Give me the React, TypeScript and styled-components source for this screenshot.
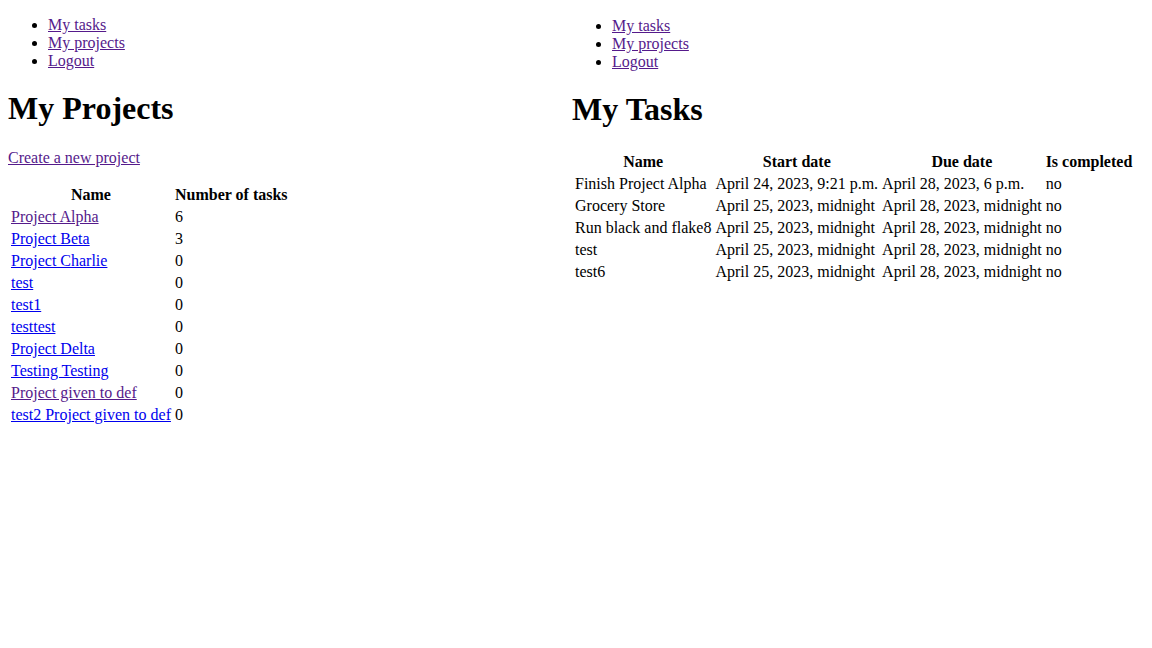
import React from "react";
import styled, { createGlobalStyle } from "styled-components";

const Global = createGlobalStyle`
  html, body { margin: 0; padding: 0; background: #fff; }
  body { font-family: "Liberation Serif", "Times New Roman", serif; font-size: 16px; color: #000; }
`;

const Page = styled.div`
  display: flex;
  align-items: flex-start;
`;

const Pane = styled.div<{ $width?: number; $offset?: number }>`
  display: flow-root;
  box-sizing: border-box;
  width: ${(p) => (p.$width ? `${p.$width}px` : "auto")};
  flex: ${(p) => (p.$width ? "none" : "1")};
  padding: ${(p) => p.$offset ?? 0}px 8px 0 8px;
`;

const NavList = styled.ul`
  margin: 16px 0;
  padding-left: 40px;
  list-style: disc;
  line-height: 18px;
`;

const Link = styled.a<{ $visited?: boolean }>`
  color: ${(p) => (p.$visited ? "#551a8b" : "#0000ee")};
  text-decoration: underline;
  cursor: pointer;
`;

const Title = styled.h1`
  font-size: 32px;
  font-weight: bold;
  margin: 20.44px 0 21.44px;
`;

const Para = styled.p`
  margin: 16px 0;
`;

const Table = styled.table`
  border-collapse: separate;
  border-spacing: 2px;
  font-size: 16px;
`;

const Th = styled.th`
  padding: 1px;
  font-weight: bold;
  text-align: center;
`;

const Td = styled.td`
  padding: 1px;
  text-align: left;
  white-space: nowrap;
`;

const Nav = () => (
  <NavList>
    <li><Link $visited>My tasks</Link></li>
    <li><Link $visited>My projects</Link></li>
    <li><Link $visited>Logout</Link></li>
  </NavList>
);

const projects: [string, number, boolean][] = [
  ["Project Alpha", 6, true],
  ["Project Beta", 3, false],
  ["Project Charlie", 0, false],
  ["test", 0, false],
  ["test1", 0, false],
  ["testtest", 0, false],
  ["Project Delta", 0, false],
  ["Testing Testing", 0, false],
  ["Project given to def", 0, true],
  ["test2 Project given to def", 0, false],
];

const tasks: [string, string, string, string][] = [
  ["Finish Project Alpha", "April 24, 2023, 9:21 p.m.", "April 28, 2023, 6 p.m.", "no"],
  ["Grocery Store", "April 25, 2023, midnight", "April 28, 2023, midnight", "no"],
  ["Run black and flake8", "April 25, 2023, midnight", "April 28, 2023, midnight", "no"],
  ["test", "April 25, 2023, midnight", "April 28, 2023, midnight", "no"],
  ["test6", "April 25, 2023, midnight", "April 28, 2023, midnight", "no"],
];

export default function App() {
  return (
    <>
      <Global />
      <Page>
        <Pane $width={564}>
          <Nav />
          <Title>My Projects</Title>
          <Para>
            <Link $visited>Create a new project</Link>
          </Para>
          <Table>
            <thead>
              <tr>
                <Th>Name</Th>
                <Th>Number of tasks</Th>
              </tr>
            </thead>
            <tbody>
              {projects.map(([name, n, v], i) => (
                <tr key={i}>
                  <Td><Link $visited={v}>{name}</Link></Td>
                  <Td>{n}</Td>
                </tr>
              ))}
            </tbody>
          </Table>
        </Pane>
        <Pane $offset={1}>
          <Nav />
          <Title>My Tasks</Title>
          <Table>
            <thead>
              <tr>
                <Th>Name</Th>
                <Th>Start date</Th>
                <Th>Due date</Th>
                <Th>Is completed</Th>
              </tr>
            </thead>
            <tbody>
              {tasks.map((t, i) => (
                <tr key={i}>
                  {t.map((c, j) => (
                    <Td key={j}>{c}</Td>
                  ))}
                </tr>
              ))}
            </tbody>
          </Table>
        </Pane>
      </Page>
    </>
  );
}
